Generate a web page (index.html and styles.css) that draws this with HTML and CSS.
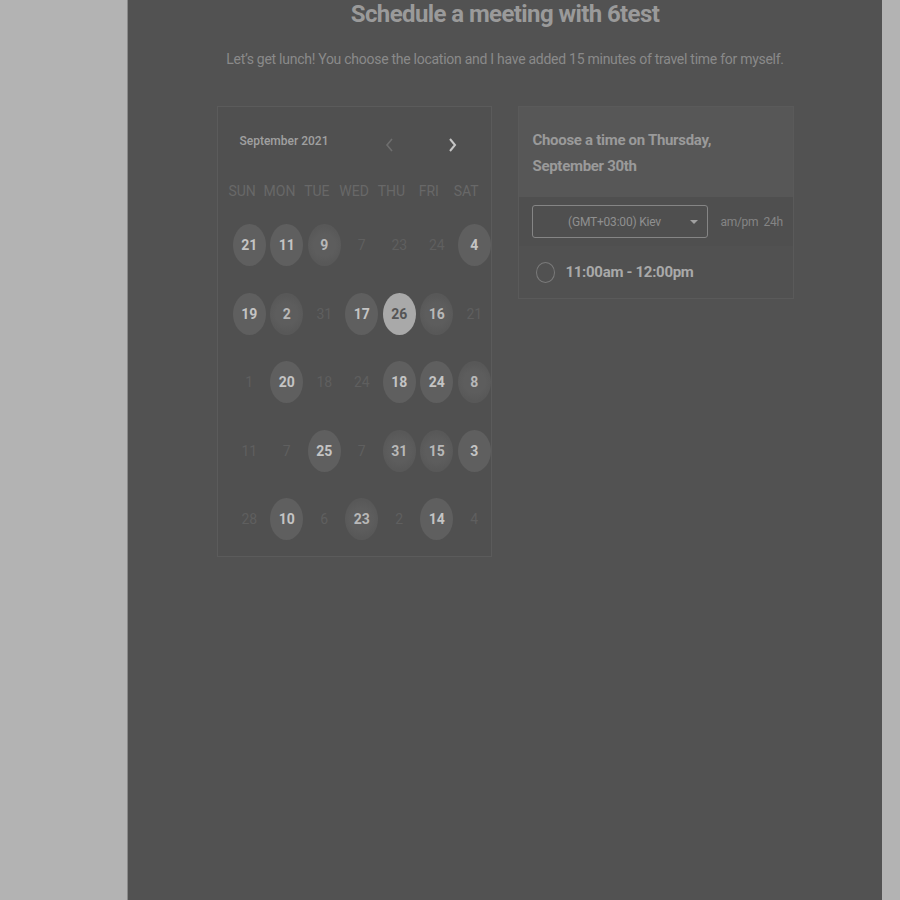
FILE: index.html
```html
<!DOCTYPE html>
<html>
<head>
<meta charset="utf-8">
<link rel="stylesheet" href="styles.css">
</head>
<body>
<div class="layout">
  <div class="gutter"></div>
  <main class="panel">
    <h1 class="title">Schedule a meeting with 6test</h1>
    <p class="subtitle">Let’s get lunch! You choose the location and I have added 15 minutes of travel time for myself.</p>
    <div class="cards">
      <section class="calendar">
        <div class="cal-head">
          <span class="month">September 2021</span>
          <span class="nav">
            <svg class="chev prev" width="12" height="16" viewBox="0 0 12 16"><path d="M8 2 L3 8 L8 14" fill="none" stroke="currentColor" stroke-width="1.6"/></svg>
            <svg class="chev next" width="12" height="16" viewBox="0 0 12 16"><path d="M4 2 L9 8 L4 14" fill="none" stroke="currentColor" stroke-width="2"/></svg>
          </span>
        </div>
        <div class="weekdays">
          <span>SUN</span><span>MON</span><span>TUE</span><span>WED</span><span>THU</span><span>FRI</span><span>SAT</span>
        </div>
        <div class="days">
          <span class="day on">21</span><span class="day on">11</span><span class="day on tex">9</span><span class="day">7</span><span class="day">23</span><span class="day">24</span><span class="day on">4</span>
          <span class="day on">19</span><span class="day on tex">2</span><span class="day">31</span><span class="day on">17</span><span class="day sel">26</span><span class="day on tex">16</span><span class="day">21</span>
          <span class="day">1</span><span class="day on">20</span><span class="day">18</span><span class="day">24</span><span class="day on">18</span><span class="day on">24</span><span class="day on tex">8</span>
          <span class="day">11</span><span class="day">7</span><span class="day on">25</span><span class="day">7</span><span class="day on tex">31</span><span class="day on tex">15</span><span class="day on">3</span>
          <span class="day">28</span><span class="day on">10</span><span class="day">6</span><span class="day on tex">23</span><span class="day">2</span><span class="day on">14</span><span class="day">4</span>
        </div>
      </section>
      <section class="times">
        <div class="times-head">Choose a time on Thursday,<br>September 30th</div>
        <div class="times-body">
          <div class="tz-row">
            <div class="tz-select">
              <span>(GMT+03:00) Kiev</span>
              <svg class="caret" width="8" height="5" viewBox="0 0 8 5"><path d="M0 0 L8 0 L4 4 Z" fill="currentColor"/></svg>
            </div>
            <span class="fmt">am/pm&nbsp; 24h</span>
          </div>
          <div class="slot">
            <span class="radio"></span>
            <span class="slot-label">11:00am - 12:00pm</span>
          </div>
        </div>
      </section>
    </div>
  </main>
  <div class="gutter right"></div>
</div>
</body>
</html>
```
FILE: styles.css
```css
html, body {
  margin: 0;
  padding: 0;
  background: #b3b3b3;
  font-family: Roboto, "Noto Sans", sans-serif;
}
.layout {
  display: grid;
  grid-template-columns: 127px 1px 754px 1fr;
  height: 900px;
}
.gutter { background: #b3b3b3; }
.panel {
  grid-column: 3;
  background: #525252;
  height: 900px;
  display: flex;
  flex-direction: column;
  align-items: center;
  box-shadow: -1px 0 0 #8a8a8a;
}
.gutter.right { grid-column: 4; }
.title {
  margin: 0;
  font-size: 24px;
  line-height: 28px;
  font-weight: 700;
  color: #9a9a9a;
  letter-spacing: -0.6px;
}
.subtitle {
  margin: 21px 0 0;
  font-size: 14px;
  line-height: 20px;
  color: #8a8a8a;
  letter-spacing: -0.27px;
}
.cards {
  margin-top: 37px;
  display: flex;
  gap: 26px;
  align-items: flex-start;
}
.calendar {
  width: 273px;
  height: 449px;
  border: 1px solid #5b5b5b;
  background: #505050;
}
.cal-head {
  display: flex;
  align-items: center;
  height: 70px;
  padding: 0 0 0 22px;
}
.month {
  font-size: 12px;
  font-weight: 500;
  color: #a0a0a0;
  margin-top: -2px;
}
.nav {
  margin-left: 55px;
  display: flex;
  align-items: center;
  gap: 50px;
  margin-top: 6px;
}
.chev.prev { color: #6e6e6e; }
.chev.next { color: #c6c6c6; }
.weekdays {
  display: grid;
  grid-template-columns: repeat(7, 37.33px);
  padding-left: 6px;
  height: 28px;
  align-items: center;
  font-size: 14px;
  color: #686868;
  text-align: center;
}
.days {
  display: grid;
  grid-template-columns: repeat(7, 37.5px);
  grid-auto-rows: 68.5px;
  padding-left: 13px;
  margin-top: 6px;
  justify-items: center;
  align-items: center;
}
.day {
  width: 33px;
  height: 42px;
  border-radius: 50%;
  display: flex;
  align-items: center;
  justify-content: center;
  font-size: 14px;
  color: #5f5f5f;
  font-weight: 400;
}
.day.on {
  background: #5f5f5f;
  color: #c4c4c4;
  font-weight: 700;
}
.day.tex {
  background: radial-gradient(circle, #5d5d5d 0 40%, #585858 70%);
  color: #b8b8b8;
}
.day.sel {
  background: #a9a9a9;
  color: #555555;
  font-weight: 700;
}
.times {
  width: 274px;
  border: 1px solid #5a5a5a;
  background: #4f4f4f;
}
.times-head {
  background: #575757;
  height: 90px;
  box-sizing: border-box;
  padding: 20px 14px 0;
  font-size: 15px;
  line-height: 26px;
  font-weight: 700;
  color: #9a9a9a;
  letter-spacing: -0.3px;
}
.times-body {
  padding: 8px 0 0;
}
.tz-row {
  display: flex;
  align-items: center;
  padding-left: 13px;
}
.tz-select {
  width: 174px;
  height: 31px;
  border: 1px solid #858585;
  border-radius: 3px;
  display: flex;
  align-items: center;
  justify-content: center;
  position: relative;
  font-size: 12px;
  color: #8f8f8f;
  letter-spacing: -0.2px;
}
.tz-select span { margin-left: -10px; }
.caret {
  position: absolute;
  right: 9px;
  top: 14px;
  color: #a0a0a0;
}
.fmt {
  margin-left: 13px;
  font-size: 12px;
  color: #858585;
  letter-spacing: -0.3px;
}
.slot {
  margin-top: 8px;
  height: 52px;
  display: flex;
  align-items: center;
  padding-left: 17px;
  background: #515151;
}
.radio {
  width: 17px;
  height: 19px;
  border: 1.5px solid #7a7a7a;
  border-radius: 50%;
}
.slot-label {
  margin-left: 11px;
  font-size: 15px;
  font-weight: 700;
  color: #a9a9a9;
  letter-spacing: -0.3px;
}
```
